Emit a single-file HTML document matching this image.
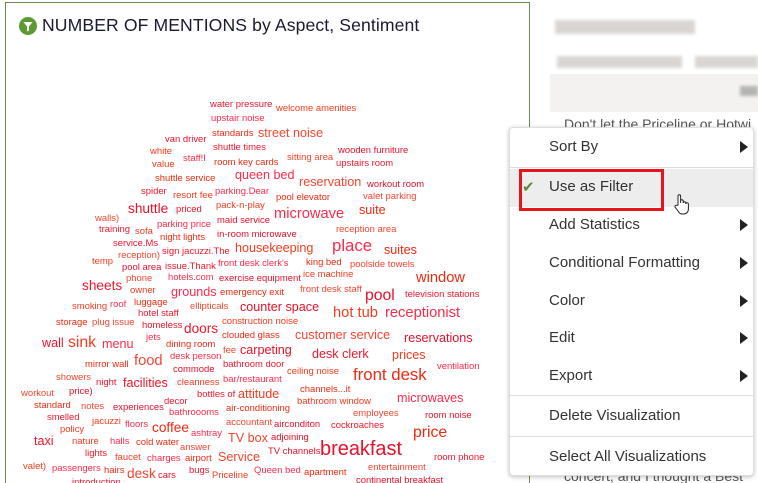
<!DOCTYPE html>
<html><head><meta charset="utf-8"><style>
*{margin:0;padding:0;box-sizing:border-box}
html,body{width:758px;height:483px;overflow:hidden}
body{background:#fff;font-family:"DejaVu Sans","Liberation Sans",sans-serif;position:relative}
.panel{position:absolute;left:5px;top:2px;width:525px;height:500px;border:1px solid #6b8a4e;border-bottom:none}
.title{position:absolute;left:42px;top:15px;font-size:17.6px;color:#1a1a2e;font-family:"Liberation Sans",sans-serif;letter-spacing:0.1px}
.ico{position:absolute;left:19px;top:17px;width:18px;height:18px;border-radius:50%;background:#5e9a32}
#wc span{position:absolute;white-space:nowrap;line-height:1;font-family:"Liberation Sans",sans-serif}
.blur{position:absolute;background:#c8c4c0;filter:blur(1.5px);opacity:.7}
.menu{position:absolute;left:509px;top:127px;width:245px;height:349px;background:#fff;border:1px solid #ddd;border-radius:4px;box-shadow:0 1px 5px rgba(0,0,0,.25);font-family:"Liberation Sans",sans-serif;font-size:15px;color:#333}
.mi{position:absolute;left:39px}
.ar{position:absolute;left:230px;width:0;height:0;border-top:6px solid transparent;border-bottom:6px solid transparent;border-left:8px solid #222}
.sep{position:absolute;left:0;width:243px;height:1px;background:#ddd}
</style></head><body>
<div class="panel"></div>
<div class="ico"><svg width="18" height="18" viewBox="0 0 18 18"><path d="M4.5 5h9l-3.5 4.5v4l-2 1v-5z" fill="#fff"/></svg></div>
<div class="title">NUMBER OF MENTIONS by Aspect, Sentiment</div>

<div class="blur" style="left:555px;top:20px;width:140px;height:14px"></div>
<div class="blur" style="left:557px;top:56px;width:125px;height:12px"></div>
<div class="blur" style="left:695px;top:56px;width:63px;height:12px"></div>
<div style="position:absolute;left:550px;top:74px;width:208px;height:38px;background:#f3f2f1"></div>
<div class="blur" style="left:740px;top:86px;width:18px;height:10px;background:#999"></div>
<div style="position:absolute;left:564px;top:116px;font-size:14px;color:#555;font-family:'Liberation Sans',sans-serif">Don't let the Priceline or Hotwi</div>
<div style="position:absolute;left:564px;top:468px;font-size:14px;color:#555;font-family:'Liberation Sans',sans-serif">concert, and I thought a Best</div>

<div id="wc"></div>

<div class="menu">
<div class="mi" style="top:10px">Sort By</div><div class="ar" style="top:13px"></div>
<div class="sep" style="top:39px"></div>
<div style="position:absolute;left:0;top:41px;width:243px;height:38px;background:#ededed"></div>
<div style="position:absolute;left:9px;top:41px;width:145px;height:42px;border:3px solid #e8141c"></div>
<div style="position:absolute;left:12px;top:50px;color:#5e8a3a;font-size:15px">✔</div>
<div class="mi" style="top:50px">Use as Filter</div>
<div class="mi" style="top:88px">Add Statistics</div><div class="ar" style="top:91px"></div>
<div class="mi" style="top:126px">Conditional Formatting</div><div class="ar" style="top:129px"></div>
<div class="mi" style="top:164px">Color</div><div class="ar" style="top:167px"></div>
<div class="mi" style="top:201px">Edit</div><div class="ar" style="top:204px"></div>
<div class="mi" style="top:239px">Export</div><div class="ar" style="top:242px"></div>
<div class="sep" style="top:267px"></div>
<div class="mi" style="top:279px">Delete Visualization</div>
<div class="sep" style="top:308px"></div>
<div class="mi" style="top:320px">Select All Visualizations</div>
</div>
<svg style="position:absolute;left:673px;top:193px" width="18" height="22" viewBox="0 0 18 22"><path d="M5 12V3a1.3 1.3 0 0 1 2.6 0v7V8a1.3 1.3 0 0 1 2.6 0v2a1.3 1.3 0 0 1 2.6 0v1a1.3 1.3 0 0 1 2.6 0v5c0 3-2 5-5 5H9c-2 0-3-1-4-3l-3-4a1.3 1.3 0 0 1 2-1.5z" fill="#fff" stroke="#222" stroke-width="1"/></svg>

<script>
var W=[["water pressure",210,106,9],["welcome amenities",276,110,9],["upstair noise",211,120,9],["standards",212,135,9],["street noise",258,135,12],["van driver",165,141,9],["shuttle times",213,149,9],["white",150,153,9],["staff!I",183,160,9],["room key cards",214,164,9],["sitting area",287,159,9],["wooden furniture",338,152,9],["upstairs room",336,165,9],["value",152,166,9],["queen bed",235,177,12],["shuttle service",155,180,9],["reservation",299,184,12],["workout room",367,186,9],["spider",141,193,9],["resort fee",173,197,9],["parking.Dear",215,193,9],["pool elevator",276,199,9],["valet parking",363,198,9],["shuttle",128,210,13],["priced",176,211,9],["pack-n-play",216,207,9],["microwave",274,216,14],["suite",359,212,12],["walls)",95,220,9],["maid service",217,222,9],["training",99,231,9],["sofa",135,233,9],["parking price",157,226,9],["night lights",160,239,9],["reception area",336,231,9],["in-room microwave",217,236,9],["service.Ms",113,245,9],["housekeeping",235,250,12],["place",332,248,16],["suites",384,252,12],["reception)",118,257,9],["sign",162,253,9],["jacuzzi.The",182,253,9],["temp",92,263,9],["front desk clerk's",218,265,9],["king bed",306,264,9],["poolside towels",350,266,9],["pool area",122,269,9],["issue.Thank",165,268,9],["ice machine",303,276,9],["hotels.com",168,279,9],["window",416,280,14],["phone",126,280,9],["exercise equipment",219,280,9],["sheets",82,287,13],["owner",130,292,9],["grounds",171,294,12],["emergency exit",220,294,9],["front desk staff",300,291,9],["pool",365,297,15],["television stations",405,296,9],["smoking",72,308,9],["roof",110,306,9],["luggage",134,304,9],["ellipticals",190,308,9],["counter space",240,309,12],["hotel staff",138,315,9],["hot tub",333,315,14],["receptionist",385,315,14],["storage",56,324,9],["plug issue",92,324,9],["homeless",142,327,9],["doors",184,330,13],["construction noise",222,323,9],["jets",146,339,9],["clouded glass",222,337,9],["customer service",295,337,12],["reservations",404,340,12],["wall",42,345,12],["sink",68,344,15],["menu",102,346,12],["dining room",166,346,9],["fee",223,352,9],["carpeting",240,352,12],["desk clerk",312,356,12],["prices",392,357,12],["desk person",170,358,9],["mirror wall",85,366,9],["food",134,363,14],["commode",173,371,9],["bathroom door",223,366,9],["ceiling noise",287,373,9],["ventilation",437,368,9],["front desk",353,377,16],["showers",56,379,9],["night",96,384,9],["facilities",123,385,12],["cleanness",177,384,9],["bar/restaurant",223,381,9],["channels...it",300,391,9],["workout",21,395,9],["price)",69,393,9],["bottles of",197,396,9],["attitude",238,396,12],["microwaves",397,400,12],["standard",34,407,9],["notes",81,408,9],["experiences",113,409,9],["decor",164,403,9],["bathroom window",297,403,9],["bathroooms",169,414,9],["air-conditioning",226,410,9],["employees",353,415,9],["room noise",425,417,9],["smelled",47,419,9],["jacuzzi",92,423,9],["floors",125,426,9],["coffee",152,429,13],["accountant",226,424,9],["airconditon",274,426,9],["cockroaches",331,427,9],["policy",60,431,9],["ashtray",191,435,9],["price",413,434,15],["TV box",228,440,12],["adjoining",271,439,9],["taxi",34,443,12],["nature",72,443,9],["halls",110,443,9],["cold water",136,444,9],["answer",180,449,9],["breakfast",320,452,19],["lights",85,455,9],["faucet",115,459,9],["charges",147,460,9],["airport",185,460,9],["Service",218,459,12],["TV channels",268,453,9],["room phone",434,459,9],["valet)",23,468,9],["passengers",52,470,9],["hairs",104,472,9],["desk",127,475,13],["cars",158,477,9],["bugs",189,472,9],["Priceline",212,477,9],["Queen bed",254,472,9],["apartment",304,474,9],["entertainment",368,469,9],["continental breakfast",356,482,9],["introduction",72,484,9]];
var cols=["#f2162d","#f53b1e","#ff2a4a","#ee2a10","#f7452f","#e8102a"];
var h="";W.forEach(function(w,i){var s=w[3]*1.05;h+='<span style="left:'+w[1]+'px;top:'+(w[2]-s*0.6)+'px;font-size:'+s+'px;color:'+cols[i%6]+'">'+w[0]+'</span>';});
document.getElementById("wc").innerHTML=h;
</script>
</body></html>
